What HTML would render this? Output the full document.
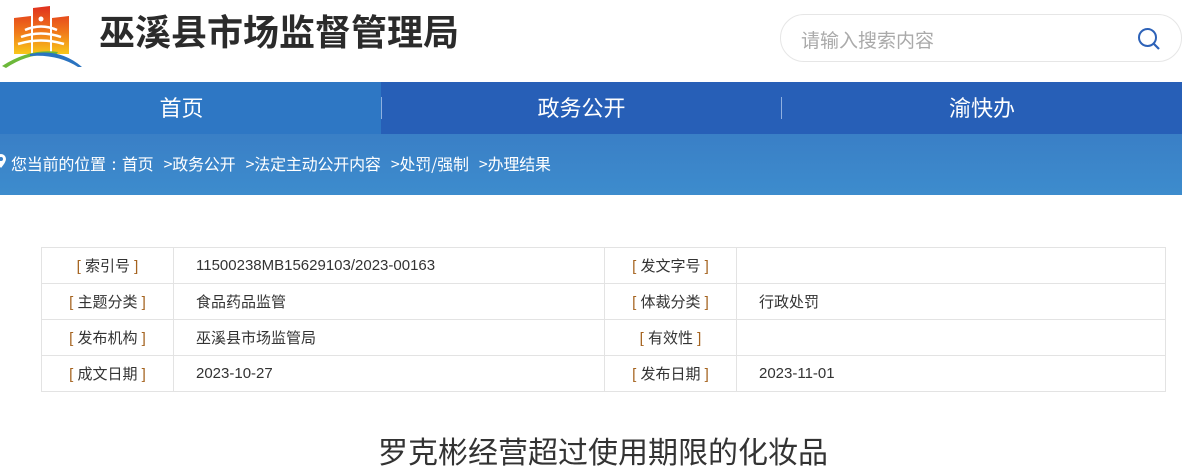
<!DOCTYPE html>
<html><head><meta charset="utf-8"><style>
*{margin:0;padding:0;box-sizing:border-box}
body{width:1182px;height:476px;overflow:hidden;background:#fff;font-family:"Liberation Sans","Noto Sans CJK SC",sans-serif;position:relative}
.logo{position:absolute;left:0;top:4px}
.title{position:absolute;left:99px;top:10px;font-size:36px;font-weight:bold;color:#2b2b2b;line-height:46px}
.search{position:absolute;left:780px;top:14px;width:402px;height:48px;border:1px solid #e6e6e6;border-radius:24px;}
.search span{position:absolute;left:20px;top:11px;font-size:19px;color:#aaa}
.nav{position:absolute;left:0;top:82px;width:1182px;height:52px;background:#275fb7}
.nav div{position:absolute;top:0;height:52px;line-height:54px;color:#fff;font-size:22px;text-align:center}
.sep{position:absolute;top:15px;width:1px;height:22px;background:#8fb0e0}
.bc{position:absolute;left:0;top:134px;width:1182px;height:61px;background:linear-gradient(180deg,#3a7fc6,#3d8ccd)}
.bc span{position:absolute;left:11px;top:17px;color:#fff;font-size:16px;font-family:"Noto Sans CJK SC",sans-serif;letter-spacing:-0.2px;white-space:pre}
.bc i{display:inline-block;width:16px;text-align:center;font-style:normal}
table{position:absolute;left:41px;top:247px;width:1125px;border-collapse:collapse;font-size:15px;color:#333}
td{border:1px solid #e3e3e3;height:36px;padding:0}
td.l{text-align:center;width:132px}
td.v{padding-left:22px}
.b{color:#a5631f}
h1{position:absolute;left:0;width:1182px;top:428px;text-align:center;font-size:30px;font-weight:normal;color:#333;padding-left:24px}
</style></head><body>
<svg class="logo" width="84" height="64" viewBox="0 0 84 64">
<defs><linearGradient id="g" x1="0" y1="0" x2="0" y2="1"><stop offset="0" stop-color="#e0301e"/><stop offset=".55" stop-color="#f07a1a"/><stop offset="1" stop-color="#f8c71a"/></linearGradient></defs>
<path d="M14 14 L31 12 L31 50 L14 50Z M33 4 L50 2 L50 50 L33 50Z M52 14 L69 12 L69 50 L52 50Z" fill="url(#g)"/>
<circle cx="41" cy="15" r="2.5" fill="#fff"/>
<path d="M25 26 Q41 19 57 26 M21 33 Q41 26 61 33 M18 40 Q41 33 64 40" stroke="#fff" stroke-width="2.5" fill="none"/>
<path d="M2 62 Q30 44 58 48 L56 51 Q30 48 6 64Z" fill="#6cb83a"/>
<path d="M30 50 Q60 44 82 63 L78 63 Q58 50 30 52Z" fill="#2a73c0"/>
</svg>
<div class="title">巫溪县市场监督管理局</div>
<div class="search"><span>请输入搜索内容</span>
<svg style="position:absolute;left:356px;top:12px" width="24" height="24" viewBox="0 0 24 24"><circle cx="10.5" cy="10.5" r="8.5" stroke="#2d62b8" stroke-width="2" fill="none"/><path d="M17 17 L22 22" stroke="#2d62b8" stroke-width="2.2"/></svg></div>
<div class="nav">
<div style="left:0;width:381px;background:#2e77c4;padding-right:18px">首页</div>
<i class="sep" style="left:381px"></i>
<div style="left:382px;width:399px">政务公开</div>
<i class="sep" style="left:781px"></i>
<div style="left:782px;width:400px">渝快办</div>
</div>
<div class="bc"><svg style="position:absolute;left:-4px;top:20px" width="10" height="14" viewBox="0 0 10 14"><path d="M5 0 A5 5 0 0 1 10 5 Q10 8 5 14 Q0 8 0 5 A5 5 0 0 1 5 0Z" fill="#fff"/><circle cx="5" cy="5" r="2" fill="#3a80c7"/></svg><span>您当前的位置<i>:</i>首页   &gt;政务公开   &gt;法定主动公开内容   &gt;处罚/强制   &gt;办理结果</span></div>
<table>
<tr><td class="l"><span class="b">[</span> 索引号 <span class="b">]</span></td><td class="v" style="width:431px">11500238MB15629103/2023-00163</td><td class="l"><span class="b">[</span> 发文字号 <span class="b">]</span></td><td class="v"></td></tr>
<tr><td class="l"><span class="b">[</span> 主题分类 <span class="b">]</span></td><td class="v">食品药品监管</td><td class="l"><span class="b">[</span> 体裁分类 <span class="b">]</span></td><td class="v">行政处罚</td></tr>
<tr><td class="l"><span class="b">[</span> 发布机构 <span class="b">]</span></td><td class="v">巫溪县市场监管局</td><td class="l"><span class="b">[</span> 有效性 <span class="b">]</span></td><td class="v"></td></tr>
<tr><td class="l"><span class="b">[</span> 成文日期 <span class="b">]</span></td><td class="v">2023-10-27</td><td class="l"><span class="b">[</span> 发布日期 <span class="b">]</span></td><td class="v">2023-11-01</td></tr>
</table>
<h1>罗克彬经营超过使用期限的化妆品</h1>
</body></html>
